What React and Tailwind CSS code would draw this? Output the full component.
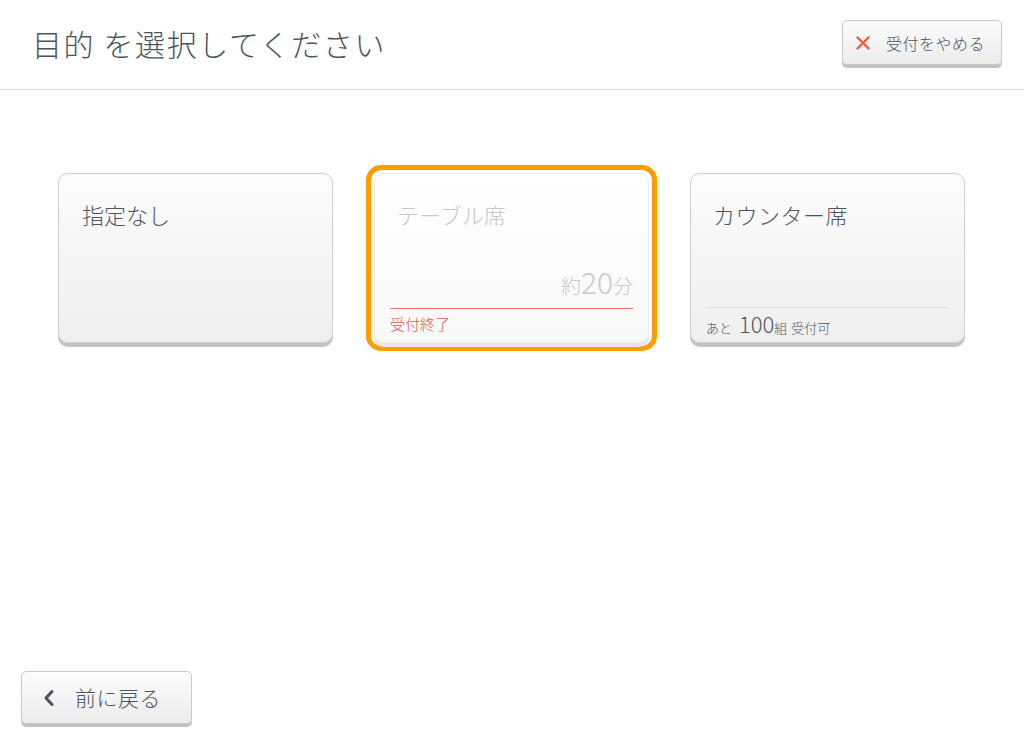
import React from "react";

const font = { fontFamily: '"Noto Sans CJK JP", "Noto Sans", sans-serif' };

function Card({ children, className = "" }) {
  return (
    <div
      className={
        "relative flex h-[170px] w-[275px] flex-col rounded-[10px] border border-[#cfcfcf] bg-gradient-to-b from-[#fcfcfc] to-[#efefef] shadow-[0_4px_0_#c2c2c2] " +
        className
      }
    >
      {children}
    </div>
  );
}

export default function App() {
  return (
    <div className="flex h-[752px] w-[1024px] flex-col bg-white font-light text-[#4b555d]" style={font}>
      <header className="flex h-[90px] shrink-0 items-center justify-between border-b border-[#dcdcdc] pl-[32px] pr-[22px]">
        <h1 className="pb-[2px] text-[30px] font-light tracking-[1.6px]">目的 を選択してください</h1>
        <button className="mb-[4px] flex h-[45px] w-[160px] items-center rounded-[5px] border border-[#c9c9c9] bg-gradient-to-b from-[#fcfcfc] to-[#ececec] pl-[13px] shadow-[0_3px_0_#c2c2c2]">
          <svg width="14" height="14" viewBox="0 0 14 14" className="shrink-0">
            <path d="M1.5 1.5 L12.5 12.5 M12.5 1.5 L1.5 12.5" stroke="#f25a3f" strokeWidth="2.4" strokeLinecap="round" />
          </svg>
          <span className="ml-[16px] text-[16px] tracking-[0.5px] text-[#4b555d]">受付をやめる</span>
        </button>
      </header>

      <main className="flex justify-between pl-[58px] pr-[59px] pt-[83px]">
        <Card>
          <div className="pl-[23px] pt-[25px] text-[22px] leading-[30px]">指定なし</div>
        </Card>

        <div className="rounded-[7px] outline outline-[5px] outline-offset-[3px] outline-[#ff9c00]">
          <Card className="rounded-[7px] border-[#ececec] from-[#ffffff] to-[#f8f8f8] shadow-[0_4px_0_#e6e6e6]">
            <div className="pl-[22px] pt-[25px] text-[22px] leading-[30px] text-[#c6c9cc]">テーブル席</div>
            <div className="flex-1" />
            <div className="mx-[15px] flex items-baseline justify-end pb-[7px] text-[#c6c9cc]">
              <span className="text-[20px]">約</span>
              <span className="text-[30px] leading-[34px]">20</span>
              <span className="text-[20px]">分</span>
            </div>
            <div className="mx-[15px] border-t-[1.5px] border-solid border-[#ec6e64]" />
            <div className="flex h-[33px] items-center px-[15px] pb-[2px] text-[15px] text-[#e0584a]">受付終了</div>
          </Card>
        </div>

        <Card>
          <div className="pl-[22px] pt-[25px] text-[22px] leading-[30px] tracking-[0.5px]">カウンター席</div>
          <div className="flex-1" />
          <div className="mx-[15px] border-t border-solid border-[#dedede]" />
          <div className="flex h-[34px] items-baseline px-[15px] pt-[1px] text-[13px]">
            <span>あと</span>
            <span className="ml-[7px] text-[22px] leading-[28px]">100</span>
            <span>組</span>
            <span className="ml-[4px]">受付可</span>
          </div>
        </Card>
      </main>

      <div className="flex-1" />

      <footer className="pb-[28px] pl-[21px]">
        <button className="flex h-[53px] w-[171px] items-center rounded-[5px] border border-[#c9c9c9] bg-gradient-to-b from-[#fcfcfc] to-[#ececec] pl-[21px] shadow-[0_3px_0_#c2c2c2]">
          <svg width="12" height="18" viewBox="0 0 12 18" className="shrink-0">
            <path d="M9 2.5 L3 9 L9 15.5" fill="none" stroke="#4b555d" strokeWidth="3" strokeLinecap="round" strokeLinejoin="round" />
          </svg>
          <span className="ml-[20px] text-[21px] tracking-[0.5px] text-[#4b555d]">前に戻る</span>
        </button>
      </footer>
    </div>
  );
}
